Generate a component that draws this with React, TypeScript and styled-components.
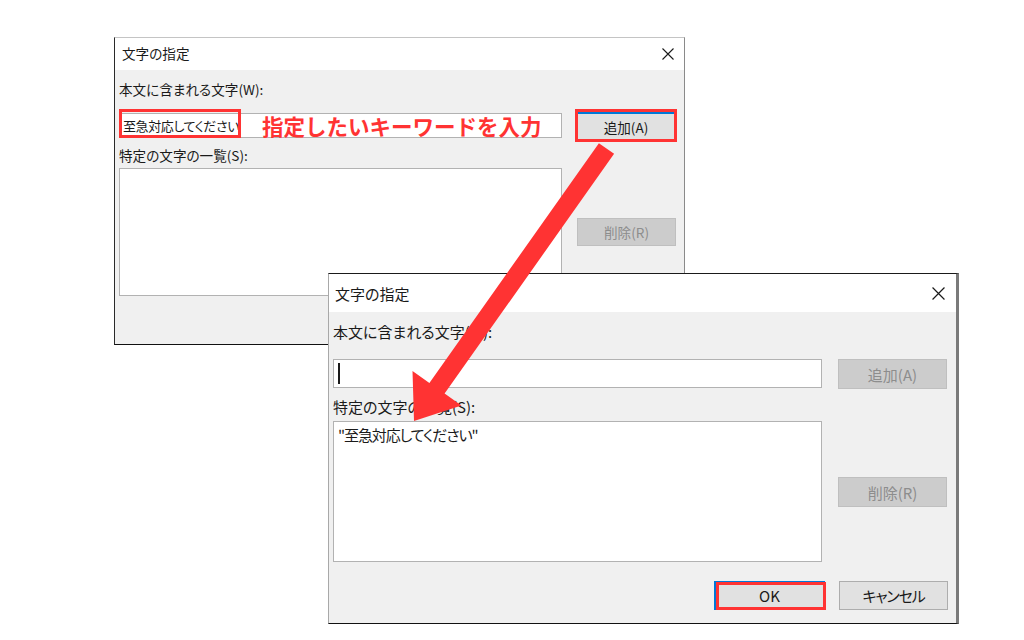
import React from 'react';
import styled, { createGlobalStyle } from 'styled-components';

const GlobalStyle = createGlobalStyle`
  html, body {
    margin: 0;
    padding: 0;
    background: #ffffff;
  }
  body {
    font-family: "Noto Sans CJK JP", "Noto Sans", sans-serif;
    color: #1a1a1a;
    font-feature-settings: "palt";
  }
`;

const Canvas = styled.div`
  position: relative;
  width: 1024px;
  height: 640px;
  overflow: hidden;
  background: #ffffff;
`;

type WinProps = { $x: number; $y: number; $w: number; $h: number; $fs: number; $front?: boolean };

const Window = styled.div<WinProps>`
  position: absolute;
  left: ${(p) => p.$x}px;
  top: ${(p) => p.$y}px;
  width: ${(p) => p.$w}px;
  height: ${(p) => p.$h}px;
  box-sizing: border-box;
  display: flex;
  flex-direction: column;
  background: #f0f0f0;
  font-size: ${(p) => p.$fs}px;
  border-top: 1px solid ${(p) => (p.$front ? '#1a1a1a' : '#c4c4c4')};
  border-left: 1px solid ${(p) => (p.$front ? '#a8a8a8' : '#2a2a2a')};
  border-bottom: 1px solid #111111;
  border-right: ${(p) => (p.$front ? '3px solid #7a7a7a' : '1px solid #8a8a8a')};
`;

const TitleBar = styled.div<{ $h: number; $pl: number; $pr: number }>`
  height: ${(p) => p.$h}px;
  flex: none;
  background: #ffffff;
  display: flex;
  align-items: center;
  justify-content: space-between;
  padding: 0 ${(p) => p.$pr}px 0 ${(p) => p.$pl}px;
`;

const Title = styled.span`
  line-height: 1;
  color: #1a1a1a;
`;

const Body = styled.div<{ $pr: number }>`
  flex: 1;
  display: flex;
  flex-direction: column;
  padding: 0 ${(p) => p.$pr}px 0 4px;
`;

const Label = styled.div<{ $mt: number; $lh: number }>`
  margin-top: ${(p) => p.$mt}px;
  line-height: ${(p) => p.$lh}px;
  height: ${(p) => p.$lh}px;
  white-space: nowrap;
  color: #1a1a1a;
`;

const Row = styled.div<{ $mt: number }>`
  display: flex;
  align-items: flex-start;
  margin-top: ${(p) => p.$mt}px;
`;

const Field = styled.div<{ $w: number; $h: number; $mt?: number }>`
  position: relative;
  box-sizing: border-box;
  width: ${(p) => p.$w}px;
  height: ${(p) => p.$h}px;
  margin-top: ${(p) => p.$mt ?? 0}px;
  background: #ffffff;
  border: 1px solid #b2b2b2;
  display: flex;
  align-items: center;
  padding-left: 3px;
  white-space: nowrap;
`;

const ListBox = styled.div<{ $w: number; $h: number }>`
  box-sizing: border-box;
  width: ${(p) => p.$w}px;
  height: ${(p) => p.$h}px;
  background: #ffffff;
  border: 1px solid #b2b2b2;
  padding: 3px 0 0 4px;
  line-height: 20px;
  white-space: nowrap;
  letter-spacing: -1.1px;
`;

const Keyword = styled.span`
  display: inline-block;
  width: 116px;
  font-size: 13px;
  letter-spacing: -0.4px;
  white-space: nowrap;
`;

const Highlight = styled.span`
  position: absolute;
  left: -1px;
  top: -5px;
  width: 122px;
  height: 29px;
  box-sizing: border-box;
  border: 3px solid #ff3333;
`;

const Note = styled.span`
  margin-left: 23px;
  font-size: 21.5px;
  font-weight: 700;
  color: #ff3333;
  font-feature-settings: normal;
`;

const Caret = styled.span`
  display: inline-block;
  width: 2px;
  height: 21px;
  margin-left: 1px;
  background: #1a1a1a;
`;

type BtnProps = { $w: number; $h: number; $ml?: number; $mt?: number; $disabled?: boolean; $tight?: boolean };

const Button = styled.div<BtnProps>`
  position: relative;
  box-sizing: border-box;
  flex: none;
  width: ${(p) => p.$w}px;
  height: ${(p) => p.$h}px;
  margin-left: ${(p) => p.$ml ?? 0}px;
  margin-top: ${(p) => p.$mt ?? 0}px;
  display: flex;
  align-items: center;
  justify-content: center;
  background: ${(p) => (p.$disabled ? '#cccccc' : '#e1e1e1')};
  border: 1px solid ${(p) => (p.$disabled ? '#bfbfbf' : '#adadad')};
  color: ${(p) => (p.$disabled ? '#8d8d8d' : '#1a1a1a')};
  letter-spacing: ${(p) => (p.$tight ? '-1.2px' : 'normal')};
  white-space: nowrap;
`;

const MarkedButton = styled(Button)`
  border: none;
  border-top: 2px solid #0078d7;
  box-shadow: 0 0 0 3px #ff3333;
`;

const DefaultButton = styled(Button)`
  border: 2px solid #0078d7;
  &::after {
    content: '';
    position: absolute;
    left: 0px;
    top: -1px;
    right: -3px;
    bottom: -2px;
    border: 3px solid #ff3333;
  }
`;

const Footer = styled.div`
  display: flex;
  justify-content: flex-end;
  gap: 14px;
  margin-top: 19px;
`;

const Overlay = styled.svg`
  position: absolute;
  left: 0;
  top: 0;
  pointer-events: none;
`;

const CloseIcon: React.FC<{ size: number }> = ({ size }) => (
  <svg width={size} height={size} viewBox="0 0 12 12">
    <path d="M0.5 0.5 L11.5 11.5 M11.5 0.5 L0.5 11.5" stroke="#1a1a1a" strokeWidth="1.1" fill="none" />
  </svg>
);

const App: React.FC = () => {
  return (
    <Canvas>
      <GlobalStyle />

      <Window $x={114} $y={37} $w={571} $h={308} $fs={13.6}>
        <TitleBar $h={32} $pl={7} $pr={10}>
          <Title>文字の指定</Title>
          <CloseIcon size={12} />
        </TitleBar>
        <Body $pr={8}>
          <Label $mt={10} $lh={18}>本文に含まれる文字(W):</Label>
          <Row $mt={14}>
            <Field $w={443} $h={25} $mt={1}>
              <Highlight />
              <Keyword>至急対応してください</Keyword>
              <Note>指定したいキーワードを入力</Note>
            </Field>
            <MarkedButton $w={96} $h={27} $ml={16}>追加(A)</MarkedButton>
          </Row>
          <Label $mt={7} $lh={18}>特定の文字の一覧(S):</Label>
          <Row $mt={4}>
            <ListBox $w={443} $h={128} />
            <Button $w={99} $h={28} $ml={15} $mt={50} $disabled>
              削除(R)
            </Button>
          </Row>
        </Body>
      </Window>

      <Window $x={328} $y={273} $w={631} $h={351} $fs={15} $front>
        <TitleBar $h={38} $pl={6} $pr={11}>
          <Title>文字の指定</Title>
          <CloseIcon size={13} />
        </TitleBar>
        <Body $pr={8}>
          <Label $mt={10} $lh={20}>本文に含まれる文字(W):</Label>
          <Row $mt={17}>
            <Field $w={489} $h={29}>
              <Caret />
            </Field>
            <Button $w={109} $h={30} $ml={16} $disabled>
              追加(A)
            </Button>
          </Row>
          <Label $mt={8} $lh={20}>特定の文字の一覧(S):</Label>
          <Row $mt={4}>
            <ListBox $w={489} $h={141}>"至急対応してください"</ListBox>
            <Button $w={109} $h={30} $ml={16} $mt={56} $disabled>
              削除(R)
            </Button>
          </Row>
          <Footer>
            <DefaultButton $w={111} $h={29}>OK</DefaultButton>
            <Button $w={109} $h={29} $tight>キャンセル</Button>
          </Footer>
        </Body>
      </Window>

      <Overlay width={1024} height={640} viewBox="0 0 1024 640">
        <polygon
          points="598.9,143.2 614.1,153.8 444.6,393.6 461.5,405.5 414,421 412.5,371 429.4,383"
          fill="#ff3333"
        />
      </Overlay>
    </Canvas>
  );
};

export default App;
